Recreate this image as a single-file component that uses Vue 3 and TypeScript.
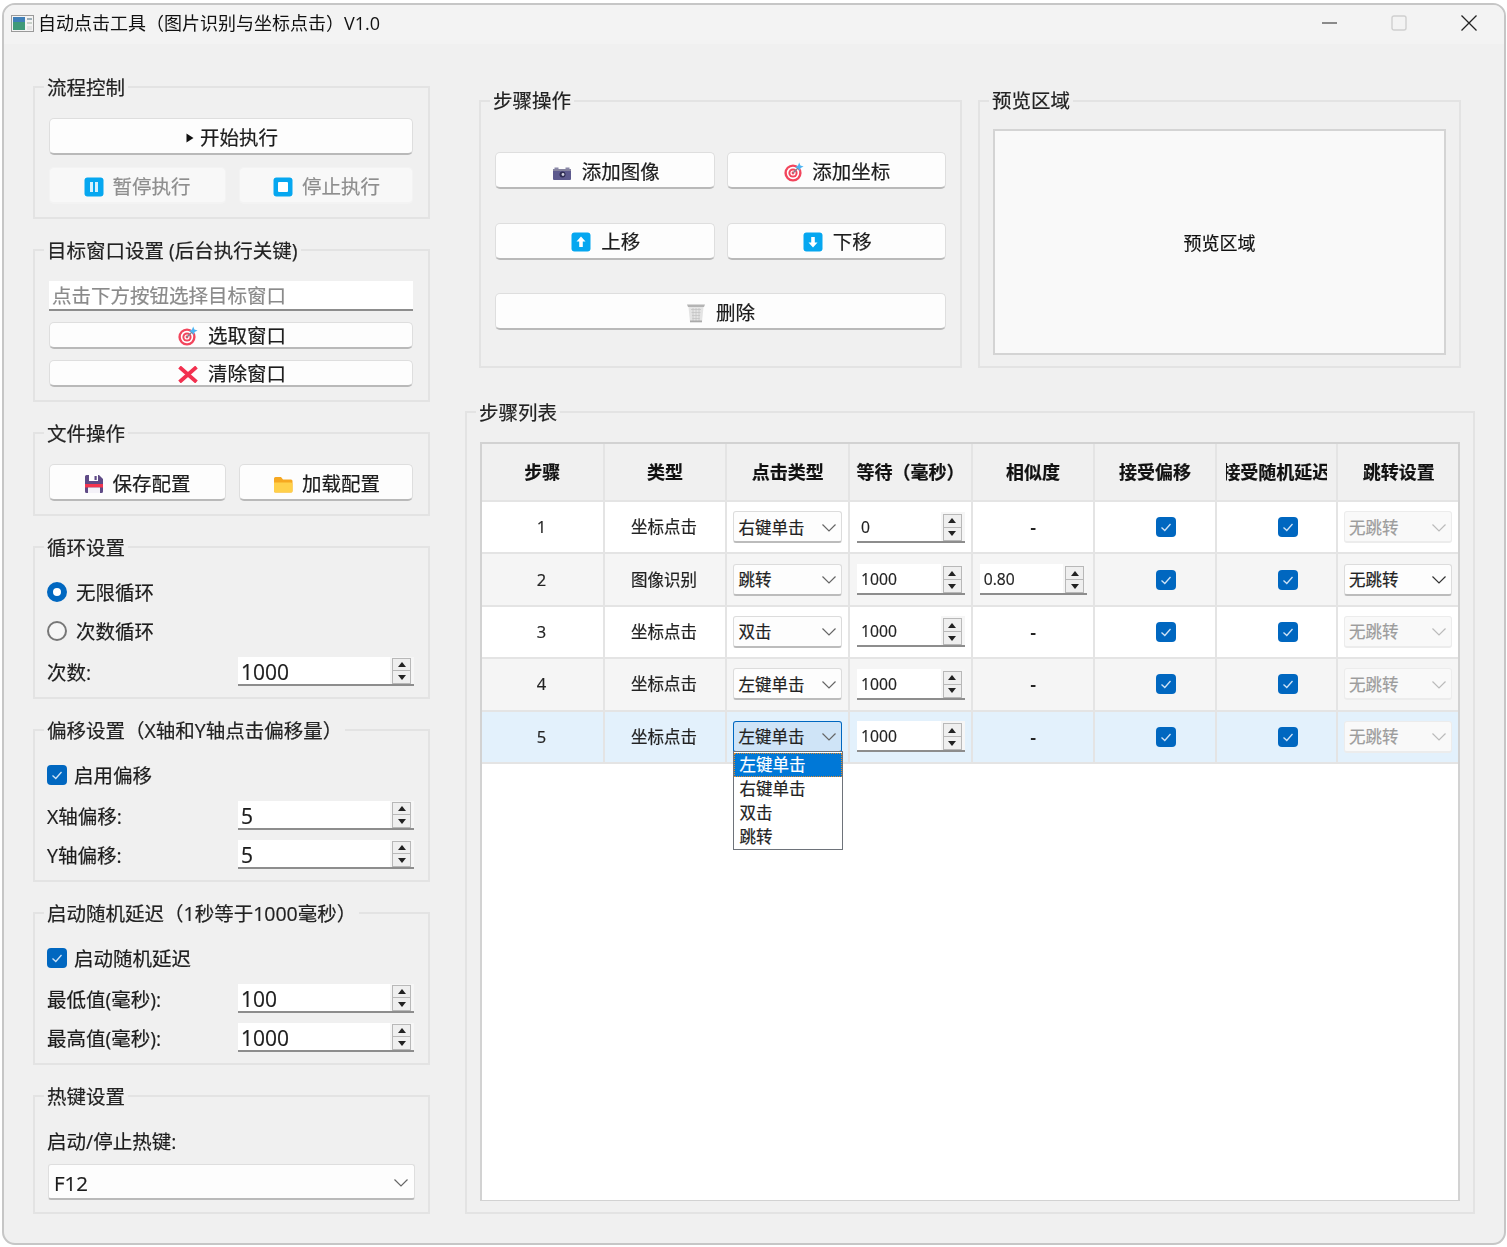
<template>
  <div class="page">
    <svg class="sprite" aria-hidden="true">
      <symbol id="i-target" viewBox="0 0 20 20">
        <circle cx="9" cy="11" r="8.6" fill="#f2455c" />
        <circle cx="9" cy="11" r="6.2" fill="#fff" />
        <circle cx="9" cy="11" r="4.6" fill="#f2455c" />
        <circle cx="9" cy="11" r="2.6" fill="#fff" />
        <circle cx="9" cy="11" r="1.4" fill="#f2455c" />
        <path d="M9 11 15 5" stroke="#7a8794" stroke-width="1.2" />
        <path d="M15.2 0.5 16.4 3.6 19.6 4.6 16.6 6 15.6 9 14 6.2 11 5.2 14 3.6Z" fill="#4cb4f2" />
      </symbol>
      <symbol id="i-up" viewBox="0 0 20 20">
        <rect x="0.5" y="0.5" width="19" height="19" rx="3" fill="#06a7f0" />
        <path d="M10 4.5 14.5 9.5H11.8V15H8.2V9.5H5.5Z" fill="#fff" />
      </symbol>
      <symbol id="i-down" viewBox="0 0 20 20">
        <rect x="0.5" y="0.5" width="19" height="19" rx="3" fill="#06a7f0" />
        <path d="M10 15.5 14.5 10.5H11.8V5H8.2V10.5H5.5Z" fill="#fff" />
      </symbol>
    </svg>

    <div class="win">
      <header class="titlebar">
        <svg class="app-icon" viewBox="0 0 23 17">
          <rect x="0.5" y="0.5" width="22" height="16" fill="#f4f4f4" stroke="#9a9a9a" />
          <rect x="2" y="2" width="12" height="13" fill="#3f9a78" />
          <rect x="2" y="2" width="12" height="5" fill="#3f7fb8" />
          <rect x="16" y="3" width="5" height="2" fill="#9fb0b8" />
          <rect x="16" y="7" width="5" height="2" fill="#c8d0c8" />
          <rect x="16" y="11" width="5" height="4" fill="#e4e4e4" />
        </svg>
        <span class="title-text">自动点击工具（图片识别与坐标点击）V1.0</span>
        <div class="win-btns">
          <svg viewBox="0 0 16 16" class="wb wb-min"><path d="M0 8H15" stroke="#222" stroke-width="1.2" /></svg>
          <svg viewBox="0 0 16 16" class="wb wb-max"><rect x="1" y="1" width="14" height="14" rx="2" fill="none" stroke="#cfcfcf" stroke-width="1.4" /></svg>
          <svg viewBox="0 0 16 16" class="wb wb-close"><path d="M0.5 0.5 15.5 15.5M15.5 0.5 0.5 15.5" stroke="#222" stroke-width="1.3" /></svg>
        </div>
      </header>

      <main class="main">
        <div class="left">
          <fieldset class="group g-flow">
            <legend>流程控制</legend>
            <button class="btn btn-start">
              <svg class="ic-play" viewBox="0 0 8 10"><path d="M0.5 0.5 7.5 5 0.5 9.5Z" fill="#111" /></svg>
              开始执行
            </button>
            <div class="btn-row">
              <button class="btn off">
                <svg class="ic" viewBox="0 0 20 20">
                  <rect x="0.5" y="0.5" width="19" height="19" rx="3" fill="#06a7f0" />
                  <rect x="6" y="5" width="3" height="10" fill="#d6f1fd" />
                  <rect x="11" y="5" width="3" height="10" fill="#d6f1fd" />
                </svg>
                暂停执行
              </button>
              <button class="btn off">
                <svg class="ic" viewBox="0 0 20 20">
                  <rect x="0.5" y="0.5" width="19" height="19" rx="3" fill="#06a7f0" />
                  <rect x="5" y="5" width="10" height="10" rx="1" fill="#fff" />
                </svg>
                停止执行
              </button>
            </div>
          </fieldset>

          <fieldset class="group g-target">
            <legend>目标窗口设置 (后台执行关键)</legend>
            <div class="line-edit">点击下方按钮选择目标窗口</div>
            <button class="btn small">
              <svg class="ic"><use href="#i-target" /></svg>
              选取窗口
            </button>
            <button class="btn small">
              <svg class="ic ic-x" viewBox="0 0 20 17"><path d="M1.500 1 18.500 16M18.500 1 1.500 16" stroke="#f2304f" stroke-width="3.800" /></svg>
              清除窗口
            </button>
          </fieldset>

          <fieldset class="group g-file">
            <legend>文件操作</legend>
            <div class="btn-row">
              <button class="btn">
                <svg class="ic" viewBox="0 0 20 20">
                  <path d="M1 2.500A1.500 1.500 0 0 1 2.500 1H15L19 5V17.500A1.500 1.500 0 0 1 17.500 19H2.500A1.500 1.500 0 0 1 1 17.500Z" fill="#5f4b86" />
                  <rect x="5" y="1" width="9" height="6" fill="#fff" />
                  <rect x="10.500" y="2" width="2.200" height="4" fill="#5f4b86" />
                  <rect x="1" y="10" width="18" height="3.500" fill="#f4364f" />
                  <rect x="4" y="13.500" width="12" height="5.500" fill="#f4f2f8" />
                </svg>
                保存配置
              </button>
              <button class="btn">
                <svg class="ic" viewBox="0 0 20 20">
                  <path d="M1 4.500A1.500 1.500 0 0 1 2.500 3H8L10 5.500H18A1.500 1.500 0 0 1 19.500 7V17A1.500 1.500 0 0 1 18 18.500H2.500A1.500 1.500 0 0 1 1 17Z" fill="#f6a821" />
                  <path d="M1 8.500H18A1.500 1.500 0 0 1 19.500 10V17A1.500 1.500 0 0 1 18 18.500H2.500A1.500 1.500 0 0 1 1 17Z" fill="#ffd04a" />
                </svg>
                加载配置
              </button>
            </div>
          </fieldset>

          <fieldset class="group g-form">
            <legend>循环设置</legend>
            <div class="choice">
              <span class="radio on"></span>
              <span class="radio-text">无限循环</span>
            </div>
            <div class="choice second">
              <span class="radio"></span>
              <span class="radio-text">次数循环</span>
            </div>
            <div class="form-row">
              <span class="form-label">次数:</span>
              <div class="spin">
                <span class="spin-val">1000</span>
                <span class="spin-btns"><i class="sb up"></i><i class="sb down"></i></span>
              </div>
            </div>
          </fieldset>

          <fieldset class="group g-form">
            <legend>偏移设置（X轴和Y轴点击偏移量）</legend>
            <div class="choice">
              <span class="check">
                <svg viewBox="0 0 20 20"><path d="M5.500 10.500 8.800 13.500 14.500 7" fill="none" stroke="#cfe3f6" stroke-width="1.300" /></svg>
              </span>
              <span class="check-text">启用偏移</span>
            </div>
            <div class="form-row">
              <span class="form-label">X轴偏移:</span>
              <div class="spin">
                <span class="spin-val">5</span>
                <span class="spin-btns"><i class="sb up"></i><i class="sb down"></i></span>
              </div>
            </div>
            <div class="form-row near">
              <span class="form-label">Y轴偏移:</span>
              <div class="spin">
                <span class="spin-val">5</span>
                <span class="spin-btns"><i class="sb up"></i><i class="sb down"></i></span>
              </div>
            </div>
          </fieldset>

          <fieldset class="group g-form">
            <legend>启动随机延迟（1秒等于1000毫秒）</legend>
            <div class="choice">
              <span class="check">
                <svg viewBox="0 0 20 20"><path d="M5.500 10.500 8.800 13.500 14.500 7" fill="none" stroke="#cfe3f6" stroke-width="1.300" /></svg>
              </span>
              <span class="check-text">启动随机延迟</span>
            </div>
            <div class="form-row">
              <span class="form-label">最低值(毫秒):</span>
              <div class="spin">
                <span class="spin-val">100</span>
                <span class="spin-btns"><i class="sb up"></i><i class="sb down"></i></span>
              </div>
            </div>
            <div class="form-row near">
              <span class="form-label">最高值(毫秒):</span>
              <div class="spin">
                <span class="spin-val">1000</span>
                <span class="spin-btns"><i class="sb up"></i><i class="sb down"></i></span>
              </div>
            </div>
          </fieldset>

          <fieldset class="group g-hotkey">
            <legend>热键设置</legend>
            <div class="hot-label">启动/停止热键:</div>
            <div class="hot-combo">
              <span>F12</span>
              <svg class="chev" viewBox="0 0 14 8"><path d="M0.500 0.500 7 7 13.500 0.500" fill="none" stroke="#666" stroke-width="1.200" /></svg>
            </div>
          </fieldset>
        </div>

        <div class="right">
          <div class="top-row">
            <fieldset class="group g-ops">
              <legend>步骤操作</legend>
              <div class="ops-grid">
                <button class="btn wide-gap">
                  <svg class="ic" viewBox="0 0 20 20">
                    <rect x="1" y="7" width="18" height="11" rx="1" fill="#5d5a8e" />
                    <rect x="2.500" y="5.500" width="4" height="2" fill="#8a88a8" />
                    <rect x="13.500" y="5.500" width="4" height="2" fill="#8a88a8" />
                    <rect x="1" y="7" width="18" height="2" fill="#86849f" />
                    <circle cx="10.500" cy="12.500" r="3" fill="#2f2d52" />
                    <circle cx="11" cy="12.500" r="1.400" fill="#cfd0e0" />
                  </svg>
                  添加图像
                </button>
                <button class="btn">
                  <svg class="ic"><use href="#i-target" /></svg>
                  添加坐标
                </button>
                <button class="btn wide-gap">
                  <svg class="ic"><use href="#i-up" /></svg>
                  上移
                </button>
                <button class="btn wide-gap">
                  <svg class="ic"><use href="#i-down" /></svg>
                  下移
                </button>
                <button class="btn wide-gap span2">
                  <svg class="ic" viewBox="0 0 20 20">
                    <path d="M1 1.500H19L18 4H2Z" fill="#b4b4b4" />
                    <path d="M2.500 4H17.500L16 19H4Z" fill="#e4e4e4" />
                    <path d="M5 6.500H15M5.500 9.500H14.500M6 12.500H14M6.300 15.500H13.700M7 5V18M10 5V18M13 5V18" stroke="#c4c4c4" stroke-width="0.800" />
                    <rect x="4" y="17.500" width="12" height="1.800" fill="#aaa" />
                  </svg>
                  删除
                </button>
              </div>
            </fieldset>

            <fieldset class="group g-preview">
              <legend>预览区域</legend>
              <div class="preview">预览区域</div>
            </fieldset>
          </div>

          <fieldset class="group g-steps">
            <legend>步骤列表</legend>
            <div class="table">
              <div class="tr thead">
                <div v-for="h in headers" :key="h" class="td th">
                  <span class="th-text" :class="{ squeezed: h === '接受随机延迟' }">{{ h }}</span>
                </div>
              </div>
              <div
                v-for="(row, i) in rows"
                :key="row.step"
                class="tr"
                :class="{ alt: i % 2 === 1, current: row.step === 5 }"
              >
                <div class="td td-text">{{ row.step }}</div>
                <div class="td td-text">{{ row.type }}</div>
                <div class="td td-ctl">
                  <div class="combo" :class="{ open: row.step === 5 }">
                    <span>{{ row.click }}</span>
                    <svg class="chev" viewBox="0 0 14 8"><path d="M0.500 0.500 7 7 13.500 0.500" fill="none" stroke="#666" stroke-width="1.200" /></svg>
                    <ul v-if="row.step === 5" class="popup">
                      <li v-for="(opt, k) in clickOptions" :key="opt" :class="{ picked: k === 0 }">{{ opt }}</li>
                    </ul>
                  </div>
                </div>
                <div class="td td-ctl">
                  <div class="spin mini">
                    <span class="spin-val">{{ row.wait }}</span>
                    <span class="spin-btns"><i class="sb up"></i><i class="sb down"></i></span>
                  </div>
                </div>
                <div class="td td-ctl">
                  <div v-if="row.similarity" class="spin mini">
                    <span class="spin-val">{{ row.similarity }}</span>
                    <span class="spin-btns"><i class="sb up"></i><i class="sb down"></i></span>
                  </div>
                  <span v-else class="dash">-</span>
                </div>
                <div v-for="n in 2" :key="n" class="td td-check">
                  <span class="check">
                    <svg viewBox="0 0 20 20"><path d="M5.500 10.500 8.800 13.500 14.500 7" fill="none" stroke="#cfe3f6" stroke-width="1.300" /></svg>
                  </span>
                </div>
                <div class="td td-ctl">
                  <div class="combo" :class="{ disabled: !row.similarity }">
                    <span>无跳转</span>
                    <svg class="chev" viewBox="0 0 14 8"><path d="M0.500 0.500 7 7 13.500 0.500" fill="none" :stroke="row.similarity ? '#333' : '#bbb'" stroke-width="1.200" /></svg>
                  </div>
                </div>
              </div>
            </div>
          </fieldset>
        </div>
      </main>
    </div>
  </div>
</template>

<script setup lang="ts">
interface Step {
  step: number;
  type: string;
  click: string;
  wait: string;
  similarity?: string;
}

const headers = ["步骤", "类型", "点击类型", "等待（毫秒）", "相似度", "接受偏移", "接受随机延迟", "跳转设置"];
const clickOptions = ["左键单击", "右键单击", "双击", "跳转"];

const rows: Step[] = [
  { step: 1, type: "坐标点击", click: "右键单击", wait: "0" },
  { step: 2, type: "图像识别", click: "跳转", wait: "1000", similarity: "0.80" },
  { step: 3, type: "坐标点击", click: "双击", wait: "1000" },
  { step: 4, type: "坐标点击", click: "左键单击", wait: "1000" },
  { step: 5, type: "坐标点击", click: "左键单击", wait: "1000" },
];
</script>

<style>
html,
body {
  margin: 0;
  background: #fff;
}
</style>

<style scoped>
* {
  box-sizing: border-box;
}

.page {
  width: 1507px;
  height: 1247px;
  padding: 3px 1px 2px 2px;
  font-family: "Open Sans", "Noto Sans CJK SC", sans-serif;
  font-size: 19.5px;
  line-height: 24px;
  color: #1c1c1c;
  -webkit-text-stroke: 0.2px;
  /* the capture is slightly soft */
  filter: blur(0.35px);
}

.sprite {
  display: none;
}

.win {
  height: 100%;
  display: flex;
  flex-direction: column;
  background: #f0f0f0;
  border: 2px solid #c6c6c6;
  border-radius: 13px;
  overflow: hidden;
}

/* title bar */
.titlebar {
  height: 39px;
  flex: none;
  display: flex;
  align-items: center;
  padding: 0 0 3px 7px;
  background: #f3f3f3;
}

.app-icon {
  width: 23px;
  height: 17px;
  margin-top: 1px;
}

.title-text {
  margin-left: 4px;
  font-size: 18px;
  color: #111;
  -webkit-text-stroke: 0;
}

.win-btns {
  margin-left: auto;
  display: flex;
  align-items: center;
  padding-right: 27px;
}

.wb {
  width: 16px;
  height: 16px;
}

.wb-max {
  margin-left: 53px;
}

.wb-close {
  margin-left: 54px;
}

/* main columns */
.main {
  flex: 1;
  min-height: 0;
  display: flex;
  gap: 35px;
  padding: 31px 29px 29px;
}

.left {
  width: 397px;
  flex: none;
  display: flex;
  flex-direction: column;
  gap: 19px;
}

.right {
  flex: 1;
  min-width: 0;
  display: flex;
  flex-direction: column;
  gap: 32px;
  padding-top: 14px;
}

/* group boxes */
.group {
  margin: 0;
  min-width: 0;
  border: 2px solid #e3e3e3;
  padding: 19px 15px 13px 14px;
}

.group legend {
  margin-left: -5px;
  padding: 0 3px;
  height: 24px;
  line-height: 26px;
  color: #222;
}

.g-flow,
.g-target,
.g-file {
  display: flex;
  flex-direction: column;
}

.g-flow {
  gap: 12px;
}

.g-target {
  gap: 11px;
}

.g-form {
  padding-top: 21px;
  padding-bottom: 11px;
}

.g-hotkey {
  padding-top: 21px;
  padding-bottom: 12px;
}

/* buttons */
.btn {
  height: 37px;
  width: 100%;
  display: flex;
  align-items: center;
  justify-content: center;
  gap: 8px;
  padding: 3px 0 0;
  font: inherit;
  color: #1c1c1c;
  background: #fdfdfd;
  border: 1px solid #dedede;
  border-bottom: 2px solid #b9b9b9;
  border-radius: 5px;
}

.btn.off {
  background: #f8f8f8;
  border-color: #f3f3f3;
  color: #8e8e8e;
}

.btn.small {
  height: 27px;
  gap: 10px;
  padding: 2px 0 0 2px;
}

.btn.wide-gap {
  gap: 10px;
}

.btn-start {
  gap: 6px;
  padding-left: 2px;
}

.btn-row {
  display: grid;
  grid-template-columns: 177px 174px;
  gap: 13px;
}

.btn-row .btn + .btn {
  gap: 9px;
  padding-left: 1px;
}

.ic {
  width: 20px;
  height: 20px;
  flex: none;
}

.ic-x {
  height: 17px;
}

.ic-play {
  width: 8px;
  height: 10px;
}

.line-edit {
  height: 30px;
  padding-left: 3px;
  line-height: 29px;
  color: #8a8a8a;
  background: #fff;
  border-bottom: 2px solid #8d8d8d;
  white-space: nowrap;
}

/* radios, checks */
.choice {
  height: 24px;
  display: flex;
  align-items: center;
  margin-left: -2px;
}

.choice.second {
  margin-top: 15px;
}

.radio {
  width: 20px;
  height: 20px;
  flex: none;
  border-radius: 50%;
  border: 2px solid #777;
  background: #f6f6f6;
}

.radio.on {
  border: 6px solid #0067c0;
  background: #fff;
}

.radio-text {
  margin-left: 9px;
  padding-top: 2px;
}

.check {
  width: 20px;
  height: 20px;
  flex: none;
  display: block;
  background: #0067c0;
  border-radius: 4px;
}

.check svg {
  display: block;
  width: 20px;
  height: 20px;
}

.check-text {
  margin-left: 7px;
  padding-top: 2px;
}

.form-row {
  display: flex;
  align-items: center;
  justify-content: space-between;
  margin: 14px -1px 0 -2px;
}

.form-row.near {
  margin-top: 10px;
}

.form-label {
  padding-top: 3px;
}

/* spin boxes */
.spin {
  width: 176px;
  height: 29px;
  display: flex;
  background: #f6f6f6;
  border-bottom: 2px solid #8d8d8d;
}

.spin-val {
  flex: 1;
  padding-left: 3px;
  font-size: 21px;
  line-height: 30px;
  background: #fff;
}

.spin-btns {
  width: 24px;
  flex: none;
  padding: 1px 3px 0 2px;
  display: flex;
  flex-direction: column;
}

.sb {
  flex: 1;
  display: flex;
  align-items: center;
  justify-content: center;
  background: #efefef;
  border: 1.5px solid #b8b8b8;
  max-height: 13px;
}

.sb + .sb {
  border-top: 0;
}

.sb::before {
  content: "";
  border-left: 4px solid transparent;
  border-right: 4px solid transparent;
}

.sb.up::before {
  border-bottom: 5px solid #222;
}

.sb.down::before {
  border-top: 5px solid #222;
}

.hot-label {
  margin-left: -2px;
  padding-top: 1px;
}

.hot-combo {
  height: 36px;
  margin: 10px -2px 0 -1px;
  padding: 2px 6px 0 5px;
  display: flex;
  align-items: center;
  justify-content: space-between;
  font-size: 20.500px;
  background: #fdfdfd;
  border: 1px solid #dedede;
  border-bottom: 2px solid #b9b9b9;
  border-radius: 3px;
}

.chev {
  width: 14px;
  height: 8px;
  flex: none;
}

/* right column */
.top-row {
  display: grid;
  grid-template-columns: 1fr 1fr;
  gap: 16px;
  padding: 0 14px;
}

.top-row legend {
  line-height: 24px;
}

.g-ops {
  padding: 39px 14px 35px;
}

.ops-grid {
  display: grid;
  grid-template-columns: 1fr 1fr;
  gap: 33.500px 12px;
}

.ops-grid .btn:not(.span2) {
  padding-left: 2px;
}

.span2 {
  grid-column: span 2;
}

.g-preview {
  padding: 16px 13px 11px;
}

.g-preview legend,
.g-steps legend {
  margin-left: -4px;
}

.preview {
  height: 226px;
  padding-top: 2px;
  display: flex;
  align-items: center;
  justify-content: center;
  font-size: 18px;
  color: #111;
  background: #f9f9f9;
  border: 2px solid #d4d4d4;
}

.g-steps {
  flex: 1;
  min-height: 0;
  display: flex;
  flex-direction: column;
  padding: 18px 13px 11px;
}

/* table */
.table {
  flex: 1;
  background: #fff;
  border: 2px solid #d2d2d2;
  border-bottom-width: 1px;
  font-size: 16.500px;
  line-height: 22px;
  color: #222;
}

.tr {
  display: grid;
  grid-template-columns: repeat(5, 122.700px) repeat(3, 121.300px);
  height: 52.400px;
  border-bottom: 2px solid #e4e4e4;
}

.tr.alt {
  background: #f5f5f5;
}

.tr.current {
  background: #e3f1fc;
}

.thead {
  height: 58px;
  background: #f0f0f0;
}

.td {
  min-width: 0;
  display: flex;
  align-items: center;
  justify-content: center;
  border-right: 2px solid #e4e4e4;
}

.td:last-child {
  border-right: 0;
}

.td-text {
  padding-right: 2px;
}

.th {
  font-size: 18px;
  font-weight: 700;
  color: #111;
}

.th-text {
  white-space: nowrap;
}

.th-text.squeezed {
  width: 101px;
  display: flex;
  justify-content: center;
  overflow: hidden;
}

.td-ctl {
  justify-content: flex-start;
  padding-left: 6px;
  padding-right: 6px;
}

.td-ctl:last-child {
  padding-right: 7px;
}

.td-ctl .dash {
  margin: 0 auto;
  font-weight: 700;
}

.td-check {
  justify-content: flex-start;
  padding-left: 61px;
}

.combo {
  position: relative;
  width: 100%;
  height: 32px;
  padding: 2px 5px 0 4px;
  display: flex;
  align-items: center;
  justify-content: space-between;
  background: #fdfdfd;
  border: 1px solid #dcdcdc;
  border-bottom: 2px solid #bcbcbc;
  border-radius: 3px;
}

.combo.disabled {
  color: #9c9c9c;
  background: #f9f9f9;
  border-color: #ececec;
}

.combo.open {
  background: #cfe4f7;
  border: 1px solid #0067c0;
  border-bottom: 2px solid #0067c0;
}

.popup {
  position: absolute;
  z-index: 2;
  top: 29px;
  left: -1px;
  width: 110px;
  margin: 0;
  padding: 1px 0 0;
  list-style: none;
  color: #222;
  background: #fff;
  border: 1px solid #6e737a;
}

.popup li {
  height: 24px;
  line-height: 23px;
  padding-left: 5px;
}

.popup li.picked {
  color: #fff;
  background: #0078d7;
  outline: 1px dotted #e08a2c;
  outline-offset: -1px;
}

.spin.mini {
  width: 108px;
  height: 31px;
  margin-left: 1px;
}

.spin.mini .spin-val {
  padding-left: 4px;
  font-size: 15.700px;
  line-height: 31px;
}

.spin.mini .spin-btns {
  padding-top: 2px;
}

.spin.mini .sb {
  max-height: 14px;
}
</style>
